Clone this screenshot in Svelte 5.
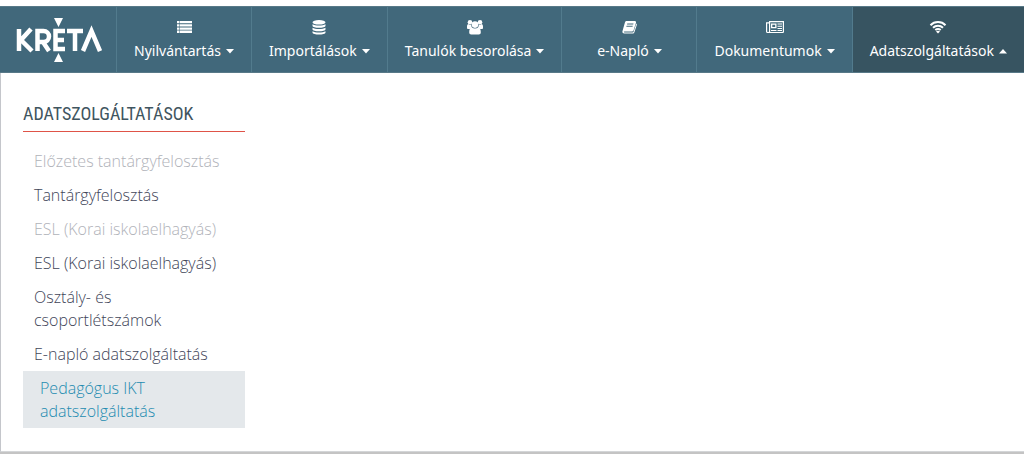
<script>
  const menu = [
    { label: 'Nyilvántartás', icon: 'list' },
    { label: 'Importálások', icon: 'database' },
    { label: 'Tanulók besorolása', icon: 'group' },
    { label: 'e-Napló', icon: 'book' },
    { label: 'Dokumentumok', icon: 'newspaper' },
    { label: 'Adatszolgáltatások', icon: 'wifi' }
  ];

  const links = [
    { label: 'Előzetes tantárgyfelosztás', disabled: true },
    { label: 'Tantárgyfelosztás' },
    { label: 'ESL (Korai iskolaelhagyás)', disabled: true },
    { label: 'ESL (Korai iskolaelhagyás)' },
    { label: 'Osztály- és csoportlétszámok' },
    { label: 'E-napló adatszolgáltatás' },
    { label: 'Pedagógus IKT adatszolgáltatás', current: true }
  ];

  let open = $state('Adatszolgáltatások');

  function toggle(label) {
    open = open === label ? '' : label;
  }
</script>

<header class="navbar">
  <a class="logo" href="#home" aria-label="KRÉTA">
    <svg width="86" height="46" viewBox="0 0 86 46" fill="none" stroke="#fff" stroke-width="4.500">
      <path d="M38 1h9l-4.500 9zM38 45h9l-4.500-9z" fill="#fff" stroke="none" />
      <path d="M3 12v22M15 12L5 23l11 11" />
      <path d="M21.500 34V14h6a5 5 0 0 1 0 11h-6M27 25l6 9" />
      <path d="M49 14H39.500v18H49M39.500 23H48" />
      <path d="M51 14h16M59 14v20" />
      <path d="M67 34L75.500 14l8.500 20" />
    </svg>
  </a>
  <nav class="menu">
    {#each menu as item}
      <button class="menu-item" class:active={open === item.label} aria-expanded={open === item.label} onclick={() => toggle(item.label)}>
        <svg class="icon" width="18" height="16" viewBox="0 0 18 16" fill="#fff">
          {#if item.icon === 'list'}
            <path d="M2 2h2.500v2.300H2zM5 2H17v2.300H5zM2 5.200h2.500v2.300H2zM5 5.200H17v2.300H5zM2 8.400h2.500v2.300H2zM5 8.400H17v2.300H5zM2 11.600h2.500V14H2zM5 11.600H17V14H5z" />
          {:else if item.icon === 'database'}
            <ellipse cx="9" cy="3.300" rx="6.500" ry="2.300" />
            <path d="M2.500 5.200c2.500 1.800 10.500 1.800 13 0v1.500c0 2.700-13 2.700-13 0zM2.500 8.700c2.500 1.800 10.500 1.800 13 0v1.500c0 2.700-13 2.700-13 0zM2.500 12.200c2.500 1.800 10.500 1.800 13 0v1.300c0 2.700-13 2.700-13 0z" />
          {:else if item.icon === 'group'}
            <circle cx="4" cy="3.200" r="2.300" />
            <circle cx="14" cy="3.200" r="2.300" />
            <circle cx="9" cy="5.600" r="3.300" />
            <path d="M1 9.300V7.500C1 6 1.700 5 2.400 5c.7.800 1.800 1 2.800.8 0 1.300.4 2.500 1.200 3.300L4 10H2q-1 0-1-.7zM17 9.300V7.500C17 6 16.300 5 15.600 5c-.7.800-1.800 1-2.800.8 0 1.300-.4 2.500-1.200 3.300L14 10h2q1 0 1-.7z" />
            <path d="M3.200 13.300c0-2.600.7-4.900 2.600-4.900 1.800 1.500 4.600 1.500 6.400 0 1.900 0 2.600 2.300 2.600 4.900 0 1.400-.8 2.200-2 2.200H5.200c-1.200 0-2-.8-2-2.200z" />
          {:else if item.icon === 'book'}
            <path fill-rule="evenodd" d="M6.700 2h8.100c1 0 1.500.8 1.200 1.700l-2.400 7.500c-.2.800-.8 1.200-1.500 1.200H4.400c-.8 0-.8 1 .2 1h8.100c.5 0 .8-.2 1-.8l2.600-8c.5.300.7.800.5 1.400l-2.400 7.300c-.3.900-.9 1.300-1.700 1.300H4.400C2.800 14.600 2 13.200 2.500 12L5 3.300C5.300 2.500 5.900 2 6.700 2zM7.300 4.500l-.3 1h6.200l.3-1zM6.600 6.700l-.3 1h6.200l.3-1z" />
          {:else if item.icon === 'newspaper'}
            <path fill-rule="evenodd" d="M3 2h15v10.500c0 1-.6 1.500-1.500 1.500h-15C.6 14 0 13.400 0 12.500V3.300h3zM4.200 3.200V13h12c.4 0 .6-.2.600-.6V3.200zM1.200 4.500v8c0 .7 1.800.7 1.800 0v-8z" />
            <path fill-rule="evenodd" d="M5 4.500h5.500v4.800H5zM6.300 5.700v2.400h2.900V5.700zM11.500 4.500H16v1h-4.500zM11.500 6.700H16v1h-4.500zM11.500 8.900H16v1h-4.500zM5 11h5.500v1H5zM11.500 11H16v1h-4.500z" />
          {:else}
            <path d="M1.500 6.200c4-4.200 11-4.200 15 0M4 8.700c2.800-2.700 7.200-2.700 10 0M6.300 11.100c1.600-1.400 3.800-1.400 5.400 0" fill="none" stroke="#fff" stroke-width="2" />
            <path d="M9 14.500l-2-2.100c1.200-1 2.800-1 4 0z" />
          {/if}
        </svg>
        <span class="label">
          {item.label}
          <svg width="8" height="5" viewBox="0 0 8 5" fill="#fff">
            <path d={open === item.label ? 'M0 4.500h8L4 0z' : 'M0 0h8L4 4.500z'} />
          </svg>
        </span>
      </button>
    {/each}
  </nav>
</header>

{#if open}
  <section class="dropdown">
    <div class="column">
      <h2>Adatszolgáltatások</h2>
      <ul>
        {#each links as link}
          <li>
            <a href="#menu" class:disabled={link.disabled} class:current={link.current} aria-disabled={link.disabled}>{link.label}</a>
          </li>
        {/each}
      </ul>
    </div>
  </section>
  <div class="page-edge"></div>
{/if}

<style>
  :global(body) {
    background: #fff;
    font-family: 'Open Sans', 'Noto Sans', sans-serif;
    overflow-x: hidden;
  }

  .navbar {
    display: flex;
    height: 67px;
    margin-top: 6px;
    background: #41687b;
    box-sizing: border-box;
    border-top: 1px solid #587988;
    border-bottom: 1px solid #587988;
  }

  .logo {
    flex: none;
    display: flex;
    width: 116px;
    box-sizing: border-box;
    padding: 10px 14px 0 16px;
  }

  .menu {
    display: flex;
    flex: 1;
  }

  .menu-item {
    display: flex;
    flex: none;
    flex-direction: column;
    align-items: center;
    box-sizing: border-box;
    min-width: 135px;
    padding: 12px 17px 0;
    border: 0;
    border-left: 1px solid #527b8d;
    background: none;
    color: #fff;
    font-family: 'Noto Sans', 'Open Sans', sans-serif;
    font-size: 14px;
    line-height: 22px;
    white-space: nowrap;
    cursor: pointer;
  }

  .menu-item:last-child {
    flex: 1 0 auto;
  }

  .menu-item.active {
    background: #375461;
  }

  .label {
    display: flex;
    align-items: center;
    gap: 5px;
    margin-top: 5px;
  }

  .dropdown {
    box-sizing: border-box;
    padding: 29px 22px 23px;
    border-left: 1px solid #c4c6cb;
    border-bottom: 1px solid #d4d6d8;
    background: #fff;
  }

  .column {
    width: 222px;
  }

  h2 {
    margin: 0 0 12px;
    padding-bottom: 5px;
    border-bottom: 1px solid #df5348;
    color: #3f5560;
    font-family: 'Roboto Condensed', 'Liberation Sans Narrow', Roboto, sans-serif;
    font-size: 18px;
    font-weight: 400;
    line-height: 24px;
    text-transform: uppercase;
  }

  ul {
    margin: 0;
    padding: 0;
    list-style: none;
  }

  li a {
    display: block;
    padding: 6px 11px 5px;
    color: #414558;
    font-size: 16px;
    font-weight: 300;
    line-height: 23px;
    text-decoration: none;
  }

  li a.disabled {
    color: #b0b2b9;
  }

  li a.current {
    padding-left: 17px;
    background: #e4e8eb;
    color: #238bb0;
  }

  .page-edge {
    height: 2px;
    background: #c4c4c4;
  }
</style>
